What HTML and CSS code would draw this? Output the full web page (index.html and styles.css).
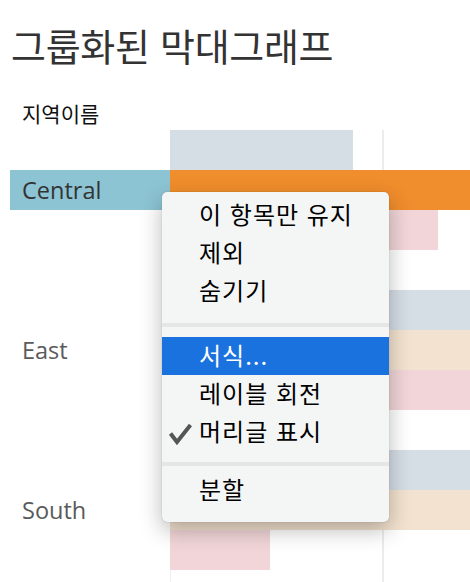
FILE: index.html
```html
<!DOCTYPE html>
<html lang="ko">
<head>
<meta charset="utf-8">
<link rel="stylesheet" href="styles.css">
</head>
<body>
<div class="page">
  <h1 class="title">그룹화된 막대그래프</h1>
  <div class="field-header">지역이름</div>
  <div class="chart">
    <div class="group">
      <div class="row"><div class="label"></div><div class="track"><div class="bar grey" style="width:183px"></div></div></div>
      <div class="row"><div class="label selected">Central</div><div class="track"><div class="bar orange" style="width:300px"></div></div></div>
      <div class="row"><div class="label"></div><div class="track"><div class="bar pink" style="width:268px"></div></div></div>
    </div>
    <div class="group">
      <div class="row"><div class="label"></div><div class="track"><div class="bar grey" style="width:300px"></div></div></div>
      <div class="row"><div class="label">East</div><div class="track"><div class="bar beige" style="width:300px"></div></div></div>
      <div class="row"><div class="label"></div><div class="track"><div class="bar pink" style="width:300px"></div></div></div>
    </div>
    <div class="group">
      <div class="row"><div class="label"></div><div class="track"><div class="bar grey" style="width:300px"></div></div></div>
      <div class="row"><div class="label">South</div><div class="track"><div class="bar beige" style="width:300px"></div></div></div>
      <div class="row"><div class="label"></div><div class="track"><div class="bar pink" style="width:100px"></div></div></div>
    </div>
  </div>

  <div class="menu">
    <div class="item">이 항목만 유지</div>
    <div class="item">제외</div>
    <div class="item">숨기기</div>
    <div class="sep sep-a"></div>
    <div class="item active">서식...</div>
    <div class="item">레이블 회전</div>
    <div class="item"><svg class="check" width="24" height="22" viewBox="0 0 24 22"><path d="M2.5 10.5 L9 19 L22.5 2" fill="none" stroke="#555" stroke-width="4" stroke-linecap="butt" stroke-linejoin="miter"/></svg>머리글 표시</div>
    <div class="sep sep-b"></div>
    <div class="item">분할</div>
  </div>
</div>
</body>
</html>
```

FILE: styles.css
```css
html, body {
  margin: 0;
  padding: 0;
  background: #ffffff;
}

.page {
  position: relative;
  width: 470px;
  height: 582px;
  overflow: hidden;
  font-family: "Noto Sans CJK KR", "Noto Sans", sans-serif;
}

.title {
  margin: 0;
  padding: 22px 0 0 11px;
  height: 48px;
  font-size: 38px;
  line-height: 46px;
  font-weight: 400;
  color: #333333;
  letter-spacing: -0.3px;
}

.field-header {
  padding: 8px 0 0 22px;
  margin-top: 20px;
  height: 32px;
  line-height: 30px;
  font-size: 21px;
  color: #111111;
}

.chart {
  margin-left: 10px;
  display: flex;
  flex-direction: column;
  gap: 40px;
  background-image:
    linear-gradient(#ececec, #ececec),
    linear-gradient(#f0f0f0, #f0f0f0);
  background-repeat: no-repeat;
  background-size: 2px 100%, 1px 100%;
  background-position: 372px 0, 160px 0;
  height: 452px;
}

.group {
  display: flex;
  flex-direction: column;
}

.row {
  display: flex;
  height: 40px;
}

.label {
  width: 148px;
  flex: 0 0 148px;
  padding-left: 12px;
  font-family: "Open Sans", "Noto Sans", sans-serif;
  font-size: 23.5px;
  line-height: 40px;
  color: #5a5a5a;
}

.label.selected {
  background: #8cc4d3;
  color: #333333;
}

.track {
  flex: 1;
  display: flex;
}

.bar {
  height: 40px;
}

.grey { background: #d5dde5; }
.orange { background: #f08d2c; }
.pink { background: #f1d5d8; }
.beige { background: #f3e2cf; }

.menu {
  position: absolute;
  left: 162px;
  top: 192px;
  width: 227px;
  padding: 4px 0 13px;
  background: #f4f5f5;
  border-radius: 5px;
  box-shadow: 0 8px 22px rgba(0, 0, 0, 0.28), 0 0 1px rgba(0, 0, 0, 0.35);
}

.item {
  position: relative;
  height: 38px;
  line-height: 36px;
  padding-left: 37px;
  font-size: 24px;
  font-weight: 400;
  color: #000000;
  letter-spacing: 1px;
}

.item.active {
  background: #1a72de;
  color: #ffffff;
}

.check {
  position: absolute;
  left: 6px;
  top: 10px;
}

.sep {
  height: 4px;
  background: #e5e6e6;
}

.sep-a {
  margin: 13px 0 10px;
}

.sep-b {
  margin: 11px 0 5px;
}
```
